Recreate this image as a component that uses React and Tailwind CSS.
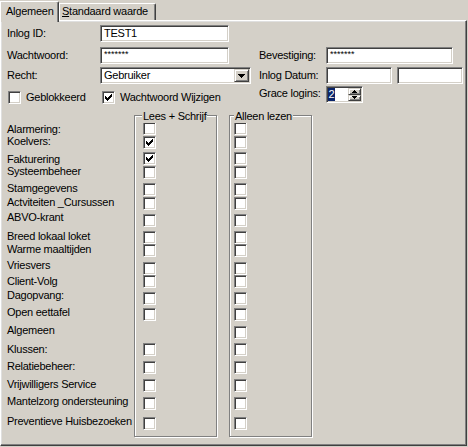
import React from "react";

// classic win2000 bevels
const sunken =
  "border border-t-[#808080] border-l-[#808080] border-r-white border-b-white shadow-[inset_1px_1px_0_#404040,inset_-1px_-1px_0_#d4d0c8]";
const raised =
  "border border-t-[#d4d0c8] border-l-[#d4d0c8] border-r-[#404040] border-b-[#404040] shadow-[inset_1px_1px_0_#fff,inset_-1px_-1px_0_#808080]";

const ROWS = [
  { label: "Alarmering:", h: "h-[14px]", lt: "mt-[2px]", a: false, b: false },
  { label: "Koelvers:", h: "h-[16px]", lt: "mt-[0px]", a: true, b: false },
  { label: "Fakturering", h: "h-[14px]", lt: "mt-[2px]", a: true, b: false },
  { label: "Systeembeheer", h: "h-[17px]", lt: "mt-[0px]", a: false, b: false },
  { label: "Stamgegevens", h: "h-[14px]", lt: "mt-[0px]", a: false, b: false },
  { label: "Actviteiten _Cursussen", h: "h-[17px]", lt: "mt-[0px]", a: false, b: false },
  { label: "ABVO-krant", h: "h-[17px]", lt: "mt-[-2px]", a: false, b: false },
  { label: "Breed lokaal loket", h: "h-[13px]", lt: "mt-[0px]", a: false, b: false },
  { label: "Warme maaltijden", h: "h-[18px]", lt: "mt-[0px]", a: false, b: false },
  { label: "Vriesvers", h: "h-[13px]", lt: "mt-[-2px]", a: false, b: false },
  { label: "Client-Volg", h: "h-[17px]", lt: "mt-[1px]", a: false, b: false },
  { label: "Dagopvang:", h: "h-[16px]", lt: "mt-[-2px]", a: false, b: false },
  { label: "Open eettafel", h: "h-[18px]", lt: "mt-[-1px]", a: false, b: false },
  { label: "Algemeen", h: "h-[17px]", lt: "mt-[-1px]", a: null, b: false },
  { label: "Klussen:", h: "h-[18px]", lt: "mt-[1px]", a: false, b: false },
  { label: "Relatiebeheer:", h: "h-[18px]", lt: "mt-[0px]", a: false, b: false },
  { label: "Vrijwilligers Service", h: "h-[18px]", lt: "mt-[0px]", a: false, b: false },
  { label: "Mantelzorg ondersteuning", h: "h-[20px]", lt: "mt-[-1px]", a: false, b: false },
  { label: "Preventieve Huisbezoeken", h: "h-[19px]", lt: "mt-[-1px]", a: false, b: false },
];

const Check = ({ checked }) => (
  <div className={`w-[13px] h-[13px] shrink-0 bg-white flex items-center justify-center ${sunken}`}>
    {checked && (
      <svg width="7" height="7" viewBox="0 0 7 7" shapeRendering="crispEdges">
        <path
          fill="#000"
          d="M6 0h1v1h-1zM5 1h2v1h-2zM0 2h1v1h-1zM4 2h3v1h-3zM0 3h2v1h-2zM3 3h3v1h-3zM0 4h5v1h-5zM1 5h3v1h-3zM2 6h1v1h-1z"
        />
      </svg>
    )}
  </div>
);

const Field = ({ w, children, top = false }) => (
  <div className={`${w} h-[17px] bg-white flex ${top ? "items-start pt-[2px]" : "items-center"} pl-[3px] ${sunken}`}>
    {children}
  </div>
);

const Stars = () => <span className="text-[9px] leading-[9px] tracking-normal">*******</span>;

const GroupBox = ({ title, titleLeft, pad, col }) => (
  <div className={`relative w-[83px] h-[322px] border border-[#808080] shadow-[inset_1px_1px_0_#fff,1px_1px_0_#fff] pt-[6px] ${pad}`}>
    <span className={`absolute ${titleLeft} top-[-6px] bg-[#d4d0c8] px-[1px] whitespace-nowrap`}>{title}</span>
    {ROWS.map((r) => (
      <div key={r.label} className={`${r.h} flex flex-col`}>
        {r[col] !== null && <Check checked={r[col]} />}
      </div>
    ))}
  </div>
);

export default function App() {
  return (
    <div className="w-[468px] h-[447px] bg-[#d4d0c8] font-['Liberation_Sans',Arial,sans-serif] text-[11px] leading-[13px] tracking-[-0.25px] text-black overflow-hidden">
      {/* tabs */}
      <div className="flex items-start h-[20px]">
        <div className="relative z-10 mt-[1px] h-[21px] w-[59px] bg-[#d4d0c8] border-t border-l border-white border-r border-r-[#404040] shadow-[inset_-1px_0_0_#808080] rounded-tr-[2px] pl-[5px] pt-[3px]">
          Algemeen
        </div>
        <div className="mt-[3px] h-[17px] w-[97px] border-t border-l border-white border-r border-r-[#404040] shadow-[inset_-1px_0_0_#808080] rounded-tr-[2px] pl-[2px] pt-[1px] whitespace-nowrap">
          <span className="underline">S</span>tandaard waarde
        </div>
      </div>

      {/* panel */}
      <div className="w-[467px] h-[426px] border border-t-white border-l-white border-r-[#404040] border-b-[#404040] shadow-[inset_-1px_-1px_0_#808080,inset_1px_1px_0_#dfdfdf] pl-[6px] pt-[4px]">
        <div className="flex items-center">
          <div className="w-[93px]">Inlog ID:</div>
          <Field w="w-[129px]">TEST1</Field>
        </div>

        <div className="flex items-center mt-[5px]">
          <div className="w-[93px]">Wachtwoord:</div>
          <Field w="w-[129px]" top>
            <Stars />
          </Field>
          <div className="w-[67px] ml-[30px]">Bevestiging:</div>
          <Field w="w-[127px]" top>
            <Stars />
          </Field>
        </div>

        <div className="flex items-center mt-[3px]">
          <div className="w-[93px]">Recht:</div>
          <div className={`w-[151px] h-[17px] bg-white flex items-center pl-[3px] ${sunken}`}>
            <span className="flex-1">Gebruiker</span>
            <div className={`w-[15px] h-[13px] mr-[1px] bg-[#d4d0c8] flex items-center justify-center ${raised}`}>
              <svg width="7" height="4" viewBox="0 0 7 4" shapeRendering="crispEdges">
                <path fill="#000" d="M0 0h7v1h-7zM1 1h5v1h-5zM2 2h3v1h-3zM3 3h1v1h-1z" />
              </svg>
            </div>
          </div>
          <div className="w-[67px] ml-[8px]">Inlog Datum:</div>
          <Field w="w-[66px]" />
          <div className="ml-[5px]">
            <Field w="w-[66px]" />
          </div>
        </div>

        <div className="flex items-center mt-[2px] h-[17px]">
          <div className="w-[95px] flex items-center gap-[5px] mt-[5px] pl-[1px]">
            <Check checked={false} />
            <span>Geblokkeerd</span>
          </div>
          <div className="w-[157px] flex items-center gap-[5px] mt-[5px]">
            <Check checked={true} />
            <span>Wachtwoord Wijzigen</span>
          </div>
          <div className="w-[67px] -mt-[2px]">Grace logins:</div>
          <div className={`w-[37px] h-[17px] bg-white flex items-stretch ${sunken}`}>
            <div className="flex-1 flex items-center pl-[1px]">
              <span className="bg-[#0a246a] text-white px-[0.5px]">2</span>
            </div>
            <div className="w-[14px] flex flex-col py-[1px] pr-[1px]">
              <div className={`flex-1 bg-[#d4d0c8] flex items-center justify-center ${raised}`}>
                <svg width="5" height="3" viewBox="0 0 5 3" shapeRendering="crispEdges">
                  <path fill="#000" d="M2 0h1v1h-1zM1 1h3v1h-3zM0 2h5v1h-5z" />
                </svg>
              </div>
              <div className={`flex-1 bg-[#d4d0c8] flex items-center justify-center ${raised}`}>
                <svg width="5" height="3" viewBox="0 0 5 3" shapeRendering="crispEdges">
                  <path fill="#000" d="M0 0h5v1h-5zM1 1h3v1h-3zM2 2h1v1h-1z" />
                </svg>
              </div>
            </div>
          </div>
        </div>

        {/* rights */}
        <div className="flex items-start mt-[12px]">
          <div className="w-[127px] pt-[7px]">
            {ROWS.map((r) => (
              <div key={r.label} className={`${r.h} flex flex-col`}>
                <div className={`${r.lt} leading-[11px] whitespace-nowrap`}>{r.label}</div>
              </div>
            ))}
          </div>
          <GroupBox title="Lees + Schrijf" titleLeft="left-[7px]" pad="pl-[8px]" col="a" />
          <div className="ml-[12px]">
            <GroupBox title="Alleen lezen" titleLeft="left-[4px]" pad="pl-[4px]" col="b" />
          </div>
        </div>
      </div>
    </div>
  );
}
